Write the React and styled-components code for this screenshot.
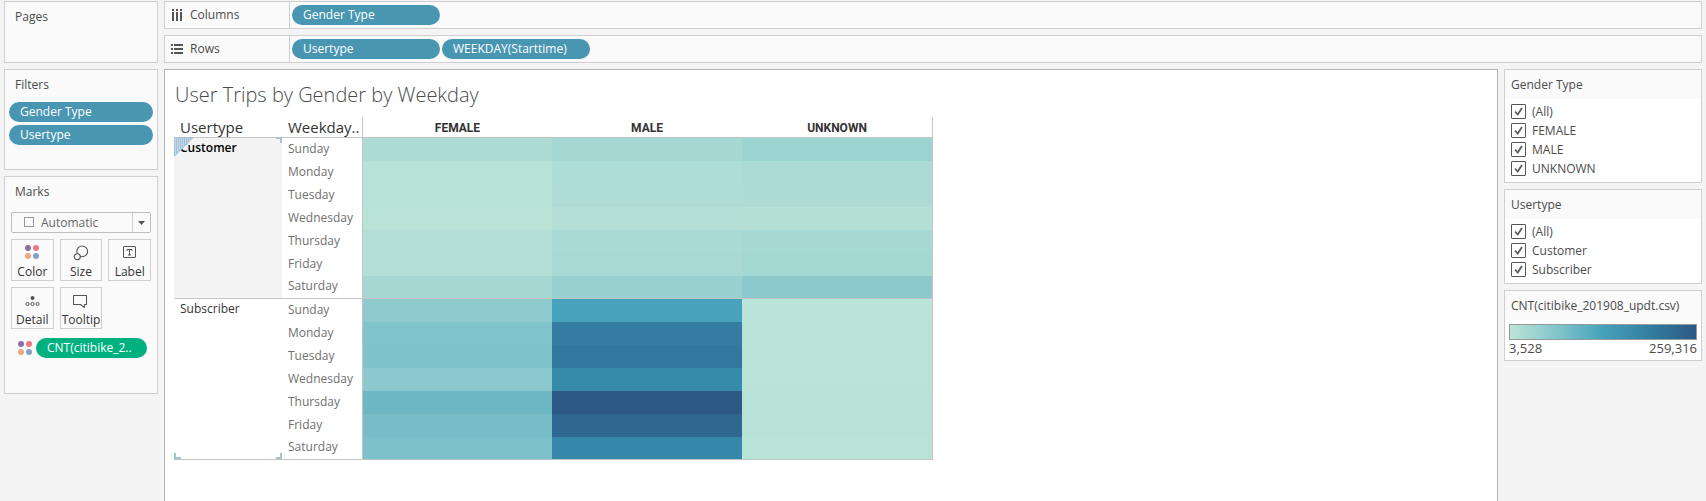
import React from "react";
import styled, { createGlobalStyle } from "styled-components";

const GlobalStyle = createGlobalStyle`
  *, *::before, *::after { box-sizing: border-box; }
  body {
    margin: 0;
    background: #f4f4f4;
    color: #4b4b4b;
    font-family: "Open Sans", "Noto Sans", sans-serif;
    font-size: 12px;
    line-height: 16px;
  }
  button, select, input { font: inherit; color: inherit; margin: 0; }
`;

const Workspace = styled.div`
  display: flex;
  gap: 6px;
  min-height: 100vh;
  padding: 1px 4px 0;
`;

const SideColumn = styled.aside`
  display: flex;
  flex-direction: column;
  flex: none;
  gap: 6px;
  width: ${(p) => p.$width}px;
`;

const MainColumn = styled.main`
  display: flex;
  flex-direction: column;
  flex: 1;
  min-width: 0;
  gap: 6px;
`;

const Panel = styled.section`
  min-height: ${(p) => p.$minHeight}px;
  padding: 7px 4px;
  border: 1px solid #cfcfcf;
  background: #fafafa;
`;

const PanelTitle = styled.h2`
  margin: 0;
  padding: 0 6px;
  font-size: 12px;
  line-height: 16px;
  font-weight: 400;
`;

const PillList = styled.div`
  display: flex;
  flex-direction: column;
  gap: 3px;
  padding-top: 9px;
`;

const Pill = styled.button`
  flex: ${(p) => (p.$grow ? 1 : "none")};
  width: ${(p) => (p.$width ? p.$width + "px" : "auto")};
  height: 20px;
  padding: 0 11px;
  border: 0;
  border-radius: 10px;
  background: ${(p) => (p.$measure ? "#00b180" : "#4996b2")};
  color: #fff;
  font-weight: 500;
  line-height: 18px;
  text-align: left;
  white-space: nowrap;
`;

const Shelf = styled.div`
  display: flex;
  align-items: stretch;
  height: 28px;
  border: 1px solid #cfcfcf;
  background: #fafafa;
`;

const ShelfLabel = styled.div`
  display: flex;
  align-items: center;
  gap: 7px;
  width: 125px;
  padding-left: 6px;
  border-right: 1px solid #cfcfcf;
`;

const ShelfPills = styled.div`
  display: flex;
  align-items: center;
  gap: 2px;
  padding-left: 2px;
`;

const Stage = styled.div`
  display: flex;
  flex: 1;
  gap: 6px;
`;

const Canvas = styled.section`
  flex: 1;
  min-width: 0;
  padding: 11px 9px 0;
  border: 1px solid #b4b4b4;
  border-bottom: 0;
  background: #fff;
`;

const SheetTitle = styled.h1`
  margin: 0 0 8px;
  padding-left: 1px;
  font-size: 20px;
  line-height: 28px;
  font-weight: 300;
`;

const MarkSelect = styled.label`
  position: relative;
  display: block;
  margin: 12px 2px 0;
  height: 21px;
  select {
    appearance: none;
    width: 100%;
    height: 100%;
    padding: 0 20px 0 29px;
    border: 1px solid #bdbdbd;
    border-radius: 2px;
    background: #fafafa;
    color: #666;
    line-height: 18px;
  }
  svg {
    position: absolute;
    pointer-events: none;
    top: 0;
  }
  svg:first-of-type { left: 12px; }
  svg:last-of-type { right: 0; }
`;

const MarkGrid = styled.div`
  display: grid;
  grid-template-columns: repeat(3, 1fr);
  gap: 6px;
  margin: 6px 2px 0;
`;

const MarkButton = styled.button`
  display: flex;
  flex-direction: column;
  align-items: center;
  justify-content: space-between;
  height: 42px;
  padding: 5px 0 0;
  border: 1px solid #cfcfcf;
  background: #fafafa;
  color: #333;
  line-height: 17px;
`;

const Encoding = styled.div`
  display: flex;
  align-items: center;
  gap: 4px;
  padding: 9px 6px 0 9px;
`;

const FilterCard = styled.fieldset`
  min-width: 0;
  margin: 0;
  padding: 0 0 4px;
  border: 1px solid #cfcfcf;
  background: #fff;
`;

const CardTitle = styled.legend`
  float: left;
  width: 100%;
  height: 29px;
  margin-bottom: 3px;
  padding: 7px 6px 0;
  background: #fafafa;
  white-space: nowrap;
`;

const Choice = styled.label`
  clear: both;
  display: flex;
  align-items: center;
  gap: 6px;
  height: 19px;
  padding-left: 6px;
`;

const Tick = styled.span`
  position: relative;
  display: flex;
  width: 15px;
  height: 15px;
  input {
    appearance: none;
    width: 15px;
    height: 15px;
    border: 1px solid #555;
    border-radius: 1px;
    background: #fff;
  }
  svg {
    position: absolute;
    inset: 0;
    pointer-events: none;
    visibility: hidden;
  }
  input:checked + svg { visibility: visible; }
`;

const LegendBody = styled.div`
  clear: both;
  padding: 1px 4px 0;
`;

const Ramp = styled.div`
  height: 16px;
  border: 1px solid #999;
  background: linear-gradient(to right, #bce4d8, #81c4cb 26%, #45a2b9 50%, #347da2 75%, #2c5985);
`;

const RampRange = styled.div`
  display: flex;
  justify-content: space-between;
  padding-top: 1px;
  font-size: 13px;
  line-height: 15px;
`;

const HeatTable = styled.table`
  table-layout: fixed;
  width: 759px;
  border-collapse: separate;
  border-spacing: 0;
`;

const FieldHead = styled.th`
  height: 21px;
  padding: 0 0 0 6px;
  border-bottom: 1px solid #c4c4c4;
  color: #333;
  font-size: 15px;
  line-height: 18px;
  font-weight: 400;
  text-align: left;
  white-space: nowrap;
`;

const ColumnHead = styled.th`
  padding: 1px 0 0;
  border-bottom: 1px solid #c4c4c4;
  border-left: ${(p) => (p.$first ? "1px solid #c4c4c4" : "0")};
  border-right: ${(p) => (p.$last ? "1px solid #c4c4c4" : "0")};
  color: #333;
  font-family: Roboto, sans-serif;
  font-size: 12px;
  line-height: 18px;
  font-weight: 700;
`;

const GroupHead = styled.th`
  position: relative;
  padding: 1px 0 0 6px;
  border-bottom: 1px solid #c4c4c4;
  background: ${(p) => (p.$selected ? "#f4f4f4" : "#fff")};
  color: ${(p) => (p.$selected ? "#000" : "#333")};
  font-weight: ${(p) => (p.$selected ? 600 : 500)};
  line-height: 18px;
  text-align: left;
  vertical-align: top;
`;

const DayHead = styled.th`
  height: 23px;
  padding: 0 0 2px 6px;
  border-bottom: ${(p) => (p.$last ? "1px solid #c4c4c4" : "0")};
  color: #707070;
  font-weight: 400;
  text-align: left;
`;

const HeatCell = styled.td`
  padding: 0;
  border-bottom: ${(p) => (p.$endRow ? "1px solid #c4c4c4" : "0")};
  border-left: ${(p) => (p.$first ? "1px solid #c4c4c4" : "0")};
  border-right: ${(p) => (p.$last ? "1px solid #c4c4c4" : "0")};
  background: ${(p) => p.$tone};
`;

const Corner = styled.svg`
  position: absolute;
  ${(p) => p.$v}: ${(p) => (p.$v === "top" ? "-1px" : "0")};
  ${(p) => p.$h}: 0;
`;

const DAYS = ["Sunday", "Monday", "Tuesday", "Wednesday", "Thursday", "Friday", "Saturday"];
const GENDERS = ["FEMALE", "MALE", "UNKNOWN"];
const GROUPS = [
  {
    name: "Customer",
    tones: [
      ["#aedcd5", "#a5d8d3", "#9bd3d1"],
      ["#b6e2d7", "#aedcd6", "#acdbd5"],
      ["#b6e2d7", "#afddd6", "#aedcd5"],
      ["#b9e3d7", "#b4e0d7", "#b4e0d6"],
      ["#b3dfd7", "#aadad5", "#a7d9d4"],
      ["#b3dfd7", "#a8d9d4", "#a4d8d3"],
      ["#a5d8d3", "#98d1cf", "#8bc9cc"],
    ],
  },
  {
    name: "Subscriber",
    tones: [
      ["#8ecace", "#47a2bb", "#bae4d8"],
      ["#7fc3cb", "#347ca2", "#b9e3d7"],
      ["#7ec2ca", "#32789e", "#b9e3d7"],
      ["#8bc9ce", "#368bab", "#bae3d8"],
      ["#6db7c5", "#2c5985", "#b8e2d7"],
      ["#77bcc7", "#2f6791", "#b8e2d7"],
      ["#7cc0c9", "#3588aa", "#b9e3d7"],
    ],
  },
];

const ColorDots = () => (
  <svg width="14" height="14" viewBox="0 0 14 14">
    <circle cx="3" cy="3" r="3" fill="#8b6f9e" />
    <circle cx="11" cy="3" r="3" fill="#ef7685" />
    <circle cx="3" cy="11" r="3" fill="#eca782" />
    <circle cx="11" cy="11" r="3" fill="#82a2c8" />
  </svg>
);

const SizeIcon = () => (
  <svg width="16" height="16" viewBox="0 0 16 16" fill="#fafafa" stroke="#555" strokeWidth="1.1">
    <circle cx="9.2" cy="6.4" r="5.4" />
    <circle cx="4.3" cy="11.7" r="3" />
  </svg>
);

const LabelIcon = () => (
  <svg width="14" height="14" viewBox="0 0 14 14" fill="none" stroke="#555">
    <rect x="0.5" y="1.5" width="12" height="11" rx="0.5" />
    <path d="M4 6V4.5h5V6M6.5 4.5v5.5M5 10h3" />
  </svg>
);

const DetailIcon = () => (
  <svg width="15" height="14" viewBox="0 0 15 14" fill="none" stroke="#555">
    <circle cx="7.5" cy="5" r="2" fill="#555" stroke="none" />
    <circle cx="2.5" cy="11" r="1.6" />
    <circle cx="7.5" cy="11" r="1.6" />
    <circle cx="12.5" cy="11" r="1.6" />
  </svg>
);

const TooltipIcon = () => (
  <svg width="15" height="15" viewBox="0 0 15 15" fill="none" stroke="#555" strokeWidth="1.1">
    <path d="M.5 2.5h13v9h-2v3l-4-3h-7z" strokeLinejoin="round" />
  </svg>
);

const ColumnsIcon = () => (
  <svg width="12" height="12" viewBox="0 0 12 12" fill="#555">
    {[1, 5, 9].map((x) => (
      <React.Fragment key={x}>
        <rect x={x} y="0" width="2" height="2" />
        <rect x={x} y="3" width="2" height="9" />
      </React.Fragment>
    ))}
  </svg>
);

const RowsIcon = () => (
  <svg width="12" height="12" viewBox="0 0 12 12" fill="#555">
    {[1, 5, 9].map((y) => (
      <React.Fragment key={y}>
        <rect x="0" y={y} width="2" height="2" />
        <rect x="3" y={y} width="9" height="2" />
      </React.Fragment>
    ))}
  </svg>
);

const Bracket = ({ v, h }) => (
  <Corner $v={v} $h={h} width="7" height="6" viewBox="0 0 7 6">
    <path
      d={v === "top" ? "M1 1h5v5" : h === "left" ? "M1 0v5h6" : "M6 0v5H1"}
      fill="none"
      stroke="#a9c1d6"
      strokeWidth="2"
    />
  </Corner>
);

const SelectedCorner = () => (
  <Corner $v="top" $h="left" width="20" height="20" viewBox="0 0 20 20">
    <path d="M0 0h20L0 20z" fill="#c3d8e8" />
    {[0, 2, 4, 6, 8, 10, 12, 14, 16].map((x) => (
      <path key={x} d={`M${x + 0.5} 0V${19 - x}`} stroke="#a3c0d8" />
    ))}
    <path d="M0 .5h19L.5 19" fill="none" stroke="#a4c0d6" />
  </Corner>
);

function FilterOptions({ title, options }) {
  return (
    <FilterCard>
      <CardTitle>{title}</CardTitle>
      {options.map((option) => (
        <Choice key={option}>
          <Tick>
            <input type="checkbox" defaultChecked />
            <svg width="15" height="15" viewBox="0 0 15 15">
              <path d="M4 7.5l2.7 3L11 4" fill="none" stroke="#5c5c5c" strokeWidth="1.8" />
            </svg>
          </Tick>
          {option}
        </Choice>
      ))}
    </FilterCard>
  );
}

function HeatMap() {
  return (
    <HeatTable>
      <colgroup>
        <col width="108" />
        <col width="80" />
        <col width="190" />
        <col width="190" />
        <col width="191" />
      </colgroup>
      <thead>
        <tr>
          <FieldHead scope="col">Usertype</FieldHead>
          <FieldHead scope="col">Weekday..</FieldHead>
          {GENDERS.map((gender, i) => (
            <ColumnHead key={gender} scope="col" $first={i === 0} $last={i === 2}>
              {gender}
            </ColumnHead>
          ))}
        </tr>
      </thead>
      {GROUPS.map((group, g) => (
        <tbody key={group.name}>
          {DAYS.map((day, d) => (
            <tr key={day}>
              {d === 0 && (
                <GroupHead scope="rowgroup" rowSpan={7} $selected={g === 0}>
                  {group.name}
                  {g === 0 ? (
                    <>
                      <SelectedCorner />
                      <Bracket v="top" h="right" />
                    </>
                  ) : (
                    <>
                      <Bracket v="bottom" h="left" />
                      <Bracket v="bottom" h="right" />
                    </>
                  )}
                </GroupHead>
              )}
              <DayHead scope="row" $last={d === 6}>{day}</DayHead>
              {group.tones[d].map((tone, i) => (
                <HeatCell key={GENDERS[i]} $tone={tone} $first={i === 0} $last={i === 2} $endRow={d === 6} />
              ))}
            </tr>
          ))}
        </tbody>
      ))}
    </HeatTable>
  );
}

export default function App() {
  return (
    <>
      <GlobalStyle />
      <Workspace>
        <SideColumn $width={154}>
          <Panel $minHeight={62}>
            <PanelTitle>Pages</PanelTitle>
          </Panel>
          <Panel $minHeight={101}>
            <PanelTitle>Filters</PanelTitle>
            <PillList>
              <Pill>Gender Type</Pill>
              <Pill>Usertype</Pill>
            </PillList>
          </Panel>
          <Panel $minHeight={218}>
            <PanelTitle>Marks</PanelTitle>
            <MarkSelect>
              <select aria-label="Mark type">
                <option>Automatic</option>
              </select>
              <svg width="12" height="20" viewBox="0 0 12 20">
                <rect x="1.5" y="5.5" width="9" height="9" fill="none" stroke="#999" />
              </svg>
              <svg width="19" height="21" viewBox="0 0 19 21">
                <path d="M.5 1v19" stroke="#cfcfcf" />
                <path d="M6 9h7l-3.5 4z" fill="#555" />
              </svg>
            </MarkSelect>
            <MarkGrid>
              <MarkButton><ColorDots />Color</MarkButton>
              <MarkButton><SizeIcon />Size</MarkButton>
              <MarkButton><LabelIcon />Label</MarkButton>
              <MarkButton><DetailIcon />Detail</MarkButton>
              <MarkButton><TooltipIcon />Tooltip</MarkButton>
            </MarkGrid>
            <Encoding>
              <ColorDots />
              <Pill $measure $grow>CNT(citibike_2..</Pill>
            </Encoding>
          </Panel>
        </SideColumn>
        <MainColumn>
          <Shelf>
            <ShelfLabel><ColumnsIcon />Columns</ShelfLabel>
            <ShelfPills>
              <Pill $width={148}>Gender Type</Pill>
            </ShelfPills>
          </Shelf>
          <Shelf>
            <ShelfLabel><RowsIcon />Rows</ShelfLabel>
            <ShelfPills>
              <Pill $width={148}>Usertype</Pill>
              <Pill $width={148}>WEEKDAY(Starttime)</Pill>
            </ShelfPills>
          </Shelf>
          <Stage>
            <Canvas>
              <SheetTitle>User Trips by Gender by Weekday</SheetTitle>
              <HeatMap />
            </Canvas>
            <SideColumn $width={198}>
              <FilterOptions title="Gender Type" options={["(All)", "FEMALE", "MALE", "UNKNOWN"]} />
              <FilterOptions title="Usertype" options={["(All)", "Customer", "Subscriber"]} />
              <FilterCard as="section">
                <CardTitle as="div">CNT(citibike_201908_updt.csv)</CardTitle>
                <LegendBody>
                  <Ramp />
                  <RampRange>
                    <span>3,528</span>
                    <span>259,316</span>
                  </RampRange>
                </LegendBody>
              </FilterCard>
            </SideColumn>
          </Stage>
        </MainColumn>
      </Workspace>
    </>
  );
}
